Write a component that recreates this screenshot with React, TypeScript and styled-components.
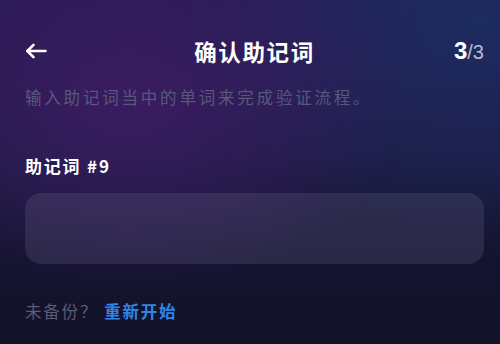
import styled, { createGlobalStyle } from "styled-components";

const Global = createGlobalStyle`
  html, body {
    margin: 0;
    padding: 0;
    background: #13132b;
  }
  * {
    box-sizing: border-box;
  }
`;

const Screen = styled.div`
  position: relative;
  width: 100%;
  min-height: 344px;
  overflow: hidden;
  padding: 35px 16px 0 25px;
  font-family: "Noto Sans CJK SC", "Noto Sans", sans-serif;
  color: white;
  background:
    radial-gradient(ellipse 280px 190px at 130px 100px, rgba(64, 28, 102, 0.85), rgba(64, 28, 102, 0) 100%),
    radial-gradient(ellipse 320px 210px at 480px 20px, rgba(28, 44, 96, 0.95), rgba(28, 44, 96, 0) 100%),
    linear-gradient(180deg, #271a52 0%, #1c1c44 45%, #141430 75%, #121229 100%);
`;

const Header = styled.div`
  display: grid;
  grid-template-columns: 60px 1fr 60px;
  align-items: center;
  height: 28px;
`;

const BackButton = styled.button`
  display: flex;
  align-items: center;
  padding: 0;
  border: none;
  background: none;
  color: white;
  cursor: pointer;
`;

const Title = styled.h1`
  margin: 0;
  text-align: center;
  font-size: 22.5px;
  font-weight: 700;
  letter-spacing: 1.6px;
  padding-left: 0;
`;

const Step = styled.div`
  text-align: right;
  font-family: "Liberation Sans", Arial, sans-serif;
  font-weight: 700;
  font-size: 24px;
  color: white;

  span {
    font-size: 20px;
    font-weight: 400;
    color: rgba(255, 255, 255, 0.7);
  }
`;

const Subtitle = styled.p`
  margin: 21px 0 0;
  font-size: 16.5px;
  letter-spacing: 2.8px;
  color: #58587c;
  line-height: 26px;
`;

const Label = styled.div`
  margin-top: 44px;
  font-size: 17px;
  font-weight: 700;
  letter-spacing: 1.8px;
  line-height: 24px;
  color: white;
`;

const Input = styled.input`
  display: block;
  width: 459px;
  height: 71px;
  margin-top: 15px;
  border: none;
  border-radius: 16px;
  padding: 0 18px;
  background: rgba(120, 116, 150, 0.22);
  color: white;
  font-size: 18px;
  outline: none;
`;

const Footer = styled.div`
  margin-top: 35px;
  font-size: 16.5px;
  letter-spacing: 1.8px;
  line-height: 24px;
  color: #5c5b74;
`;

const Restart = styled.a`
  margin-left: 6px;
  font-weight: 700;
  color: #2f86e8;
  text-decoration: none;
`;

export default function App() {
  return (
    <>
      <Global />
      <Screen>
        <Header>
          <BackButton aria-label="back">
            <svg width="22" height="16" viewBox="0 0 22 16" fill="none">
              <path
                d="M20.5 8H2.5M8.5 1.8L2.3 8l6.2 6.2"
                stroke="white"
                strokeWidth="2.6"
                strokeLinecap="round"
                strokeLinejoin="round"
              />
            </svg>
          </BackButton>
          <Title>确认助记词</Title>
          <Step>
            3<span>/3</span>
          </Step>
        </Header>
        <Subtitle>输入助记词当中的单词来完成验证流程。</Subtitle>
        <Label>助记词 #9</Label>
        <Input />
        <Footer>
          未备份？<Restart href="#">重新开始</Restart>
        </Footer>
      </Screen>
    </>
  );
}
